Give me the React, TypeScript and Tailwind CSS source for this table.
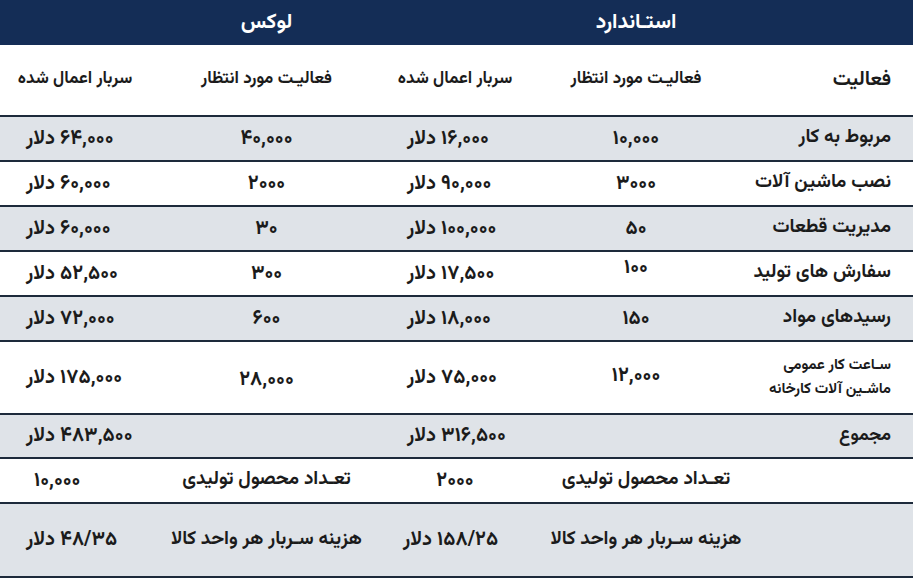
const rows = [
  { label: "مربوط به کار", c2: "۱۰,۰۰۰", c3: "۱۶,۰۰۰ دلار", c4: "۴۰,۰۰۰", c5: "۶۴,۰۰۰ دلار", bg: "bg-[#dfe3e8]", lift: "" },
  { label: "نصب ماشین آلات", c2: "۳۰۰۰", c3: "۹۰,۰۰۰ دلار", c4: "۲۰۰۰", c5: "۶۰,۰۰۰ دلار", bg: "bg-white", lift: "" },
  { label: "مدیریت  قطعات", c2: "۵۰", c3: "۱۰۰,۰۰۰ دلار", c4: "۳۰", c5: "۶۰,۰۰۰ دلار", bg: "bg-[#dfe3e8]", lift: "" },
  { label: "سفارش های تولید", c2: "۱۰۰", c3: "۱۷,۵۰۰ دلار", c4: "۳۰۰", c5: "۵۲,۵۰۰ دلار", bg: "bg-white", lift: "mb-3" },
  { label: "رسیدهای مواد", c2: "۱۵۰", c3: "۱۸,۰۰۰ دلار", c4: "۶۰۰", c5: "۷۲,۰۰۰ دلار", bg: "bg-[#dfe3e8]", lift: "" },
];

const grid = "grid grid-cols-[168px_218px_144px_233px_150px] items-center border-b-2 border-[#1d2a3b]";

export default function App() {
  return (
    <div
      dir="rtl"
      className="w-[913px] h-[581px] bg-white text-[#1b1b1b] text-[20px] font-bold overflow-hidden font-['Vazirmatn',sans-serif]"
    >
      <div className="grid grid-cols-[168px_218px_144px_233px_150px] items-center h-[45px] bg-[#142d56] text-white text-[21px]">
        <div />
        <div className="text-center">استـاندارد</div>
        <div />
        <div className="text-center">لوکس</div>
        <div />
      </div>

      <div className={`${grid} h-[72px] text-[17px]`}>
        <div className="pr-[22px] text-[20px]">فعالیت</div>
        <div className="text-center">فعالیـت مورد انتظار</div>
        <div className="text-center">سربار اعمال شده</div>
        <div className="text-center">فعالیـت مورد انتظار</div>
        <div className="text-center">سربار اعمال شده</div>
      </div>

      {rows.map((r) => (
        <div key={r.label} className={`${grid} h-[45px] ${r.bg}`}>
          <div className="pr-[22px] text-[19px]">{r.label}</div>
          <div className={`text-center ${r.lift}`}>{r.c2}</div>
          <div className="text-left pl-[24px]">{r.c3}</div>
          <div className="text-center">{r.c4}</div>
          <div className="text-left pl-[26px]">{r.c5}</div>
        </div>
      ))}

      <div className={`${grid} h-[73px] bg-white`}>
        <div className="pr-[22px] text-[15px] leading-[24px]">
          <div>سـاعت کار عمومی</div>
          <div>ماشـین آلات کارخانه</div>
        </div>
        <div className="text-center mb-1">۱۲,۰۰۰</div>
        <div className="text-left pl-[24px]">۷۵,۰۰۰ دلار</div>
        <div className="text-center mt-1">۲۸,۰۰۰</div>
        <div className="text-left pl-[26px]">۱۷۵,۰۰۰ دلار</div>
      </div>

      <div className={`${grid} h-[44px] bg-[#dfe3e8]`}>
        <div className="pr-[22px] text-[18px]">مجموع</div>
        <div />
        <div className="text-left pl-[24px]">۳۱۶,۵۰۰ دلار</div>
        <div />
        <div className="text-left pl-[26px]">۴۸۳,۵۰۰ دلار</div>
      </div>

      <div className={`${grid} h-[45px] bg-white`}>
        <div />
        <div className="text-center text-[19px] pl-5">تعـداد محصول تولیدی</div>
        <div className="text-center">۲۰۰۰</div>
        <div className="text-center text-[19px]">تعـداد محصول تولیدی</div>
        <div className="text-left pl-[34px]">۱۰,۰۰۰</div>
      </div>

      <div className={`${grid} h-[74px] bg-[#dfe3e8]`}>
        <div />
        <div className="text-center text-[19px] pl-5">هزینه سـربار هر واحد کالا</div>
        <div className="text-left pl-[20px]">۱۵۸/۲۵ دلار</div>
        <div className="text-center text-[19px]">هزینه سـربار هر واحد کالا</div>
        <div className="text-left pl-[26px]">۴۸/۳۵ دلار</div>
      </div>
    </div>
  );
}
